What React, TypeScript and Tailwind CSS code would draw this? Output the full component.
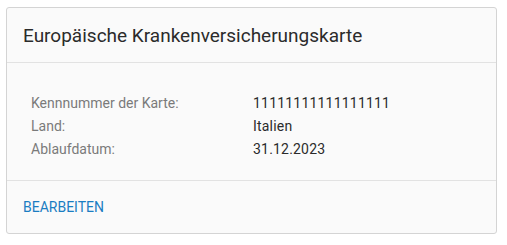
import React from 'react';

const rows = [
  { label: 'Kennnummer der Karte:', value: '11111111111111111' },
  { label: 'Land:', value: 'Italien' },
  { label: 'Ablaufdatum:', value: '31.12.2023' },
];

const App: React.FC = () => {
  return (
    <div className="min-h-screen bg-white pl-[6px] pr-[10px] pt-[7px] font-['Roboto',sans-serif]">
      <div className="rounded-[3px] border border-[#d4d4d4] bg-[#fafafa]">
        <div className="flex h-[55px] items-center border-b border-[#e2e2e2] px-4 pt-[2px]">
          <h2 className="text-[19px] text-[#2b2b2b]">Europäische Krankenversicherungskarte</h2>
        </div>
        <div className="h-[117px] px-6 pt-[29px]">
          {rows.map((row) => (
            <div key={row.label} className="flex h-[23px] items-center text-[14px]">
              <span className="w-[222px] text-[#7a7a7a]">{row.label}</span>
              <span className="tracking-[0.2px] text-[#2b2b2b]">{row.value}</span>
            </div>
          ))}
        </div>
        <div className="flex h-[53px] items-center border-t border-[#e2e2e2] px-4">
          <button className="text-[14px] font-normal text-[#1a7dc2]">BEARBEITEN</button>
        </div>
      </div>
    </div>
  );
};

export default App;
